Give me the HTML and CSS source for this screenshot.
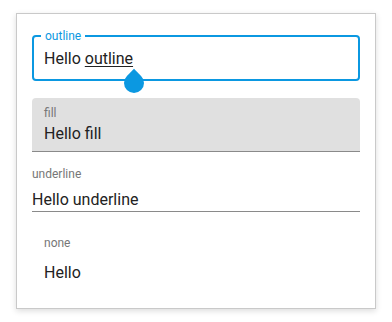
FILE: index.html
```html
<!DOCTYPE html>
<html>
<head>
<meta charset="utf-8">
<link rel="stylesheet" href="styles.css">
</head>
<body>
<div class="card">
  <div class="field outline">
    <span class="float-label">outline</span>
    <div class="value">Hello <span class="u">outline</span></div>
    <span class="handle"></span>
  </div>
  <div class="field fill">
    <div class="label">fill</div>
    <div class="value">Hello fill</div>
  </div>
  <div class="field underline">
    <div class="label">underline</div>
    <div class="value">Hello underline</div>
  </div>
  <div class="field none">
    <div class="label">none</div>
    <div class="value">Hello</div>
  </div>
</div>
</body>
</html>
```
FILE: styles.css
```css
html, body {
  margin: 0;
  padding: 0;
  background: #ffffff;
}
body {
  padding: 13px 16px;
  font-family: Roboto, "Noto Sans", sans-serif;
  color: #212121;
}
.card {
  width: 360px;
  box-sizing: border-box;
  border: 1px solid #c9c9c9;
  box-shadow: 0 2px 6px rgba(0, 0, 0, 0.14);
  padding: 21px 15px 15px;
  display: flex;
  flex-direction: column;
  background: #fff;
}
.label, .float-label {
  font-size: 12px;
  line-height: 14px;
  color: #777;
}
.value {
  font-size: 16px;
  line-height: 20px;
  color: #222;
}
.outline {
  position: relative;
  height: 46px;
  box-sizing: border-box;
  border: 2px solid #0b98e1;
  border-radius: 4px;
  padding: 12px 10px 10px;
  margin-bottom: 17px;
}
.float-label {
  position: absolute;
  left: 7px;
  top: -8px;
  padding: 0 4px;
  background: #fff;
  color: #0b98e1;
}
.u {
  text-decoration: underline;
  text-decoration-thickness: 1px;
  text-underline-offset: 2px;
}
.handle {
  position: absolute;
  left: 90px;
  top: 36px;
  width: 20px;
  height: 20px;
  background: #0b98e1;
  border-radius: 0 50% 50% 50%;
  transform: rotate(45deg);
}
.fill {
  background: #e0e0e0;
  border-radius: 4px 4px 0 0;
  border-bottom: 1px solid #8a8a8a;
  padding: 8px 12px 7px;
}
.fill .value {
  margin-top: 4px;
}
.underline {
  margin-top: 15px;
  border-bottom: 1px solid #8a8a8a;
  padding-bottom: 1px;
}
.underline .value {
  margin-top: 9px;
}
.none {
  padding: 24px 12px 10px;
}
.none .value {
  margin-top: 13px;
}
```
